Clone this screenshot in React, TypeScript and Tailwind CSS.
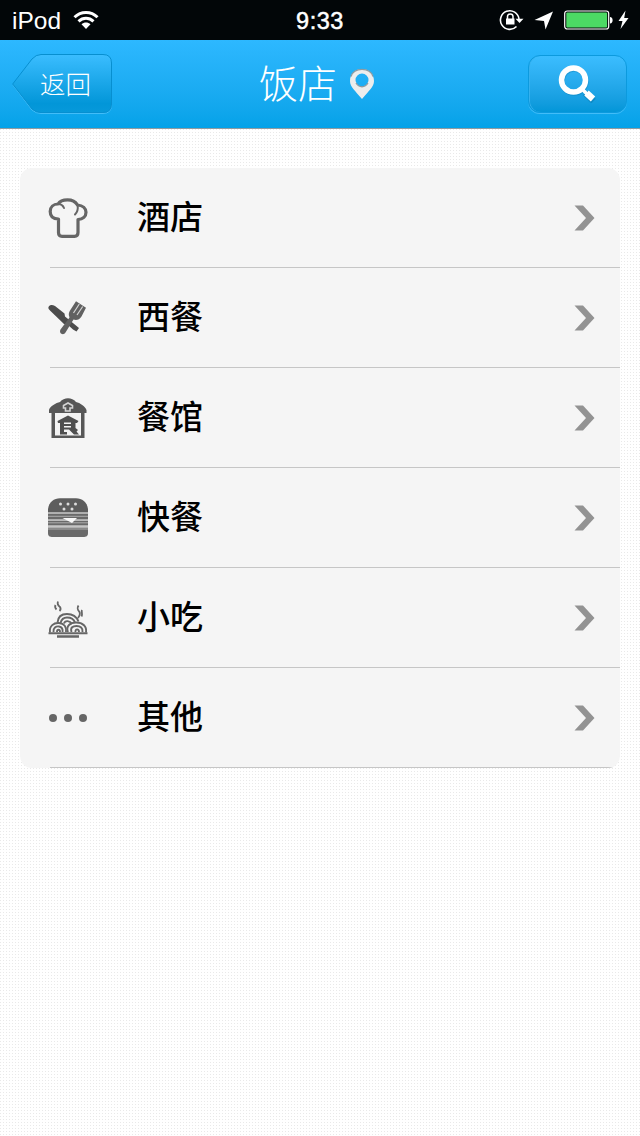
import React from 'react';

const ChefHatIcon = () => (
  <svg width="40" height="40" viewBox="0 0 40 40" fill="none" stroke="#666" strokeWidth="3.200" strokeLinejoin="round" strokeLinecap="round">
    <path
      d="M10.500 21 C5 21 2.200 18 2.200 13.500 C2.200 9 5.500 6 10 6 C11.500 3.500 15 1.800 19.500 1.800 C24 1.800 27.500 3.600 29.500 7 C35 7.500 38 10.500 38 14.300 C38 18.500 35 21.300 30 21.500 L30 34.500 C30 37 29 38.300 26.500 38.300 L14 38.300 C11.500 38.300 10.500 37 10.500 34.500 Z"
      fill="#f5f5f5"
    />
    <path d="M10 6 C13 6 15 7.500 16 10" strokeWidth="2" />
    <path d="M29.500 7 C30.300 11 29.500 14 27 16.500" strokeWidth="2" />
  </svg>
);

const CutleryIcon = () => (
  <svg width="40" height="40" viewBox="0 0 40 40" fill="none">
    <path d="M0.800 8.500 C2 6.500 4.500 6.500 7 8 L16.500 15.500 L17 18.500 L31 30 L28.500 33.500 L25 31.500 L19.500 26.500 L16 26 L2.500 13 C.5 11.500 -.2 10 .8 8.500 Z" fill="#4c4c4c" />
    <path d="M28 3.300 L38 9.800 L33.500 18.500 C31.500 22 28 22.500 25.500 21.500 L17.500 34.500 C15.500 38 10.500 35.500 12.500 31.500 L21.500 19.500 C20 16 21 13.500 23 11 Z" fill="#616161" />
    <path d="M31.300 6 L25.500 15 M34.700 8.500 L29 17" stroke="#d4d4d4" strokeWidth="1.200" />
  </svg>
);

const DinerIcon = () => (
  <svg width="40" height="40" viewBox="0 0 40 40" fill="none">
    <path d="M1 12 C2 8 8 5 12 4 C14 1.500 17 0.300 20 0.300 C23 0.300 26 1.500 28 4 C32 5 37 8 38.500 12 L38.500 15 L36.500 15 L36.500 40 L3.500 40 L3.500 15 L1 15 Z" fill="#575757" />
    <path d="M7 15 H33 V37.500 H7 Z" fill="#f3f3f3" />
    <path d="M17.500 13 H22 V10 H24.500 V7.500 L20 5 L15.500 7.500 V10 H17.500 Z" stroke="#d4d4d4" strokeWidth="1.600" />
    <path d="M20 17.500 L30.500 23 L29 25 H27.500 V30 L30 32 L28.500 33.500 L31 36.500 H26 L21 31.500 H16 V34 H19 V36.500 H12 V25 H10 L9.500 23 Z" fill="#4f4f4f" />
    <path d="M16 25.300 H23 M16 28.800 H23" stroke="#f3f3f3" strokeWidth="1.600" />
  </svg>
);

const BurgerIcon = () => (
  <svg width="40" height="40" viewBox="0 0 40 40" fill="none">
    <path d="M0 14.500 V11 C1 4 6 .3 12 .3 H28 C34 .3 39 4 40 11 V14.500 Z" fill="#5d5d5d" />
    <path d="M0 15.500 H40 V21.500 H0 Z M0 23 H40 V27.500 H0 Z M0 29.500 H40 V35 C40 38 38.500 39 35 39 H5 C1.500 39 0 38 0 35 Z" fill="#6a6a6a" />
    <path d="M0 15 H40 M0 18.300 H40 M0 22.500 H40 M0 24.800 H40 M0 28.700 H40 M0 31 H40" stroke="#b4b4b4" strokeWidth="0.900" />
    <path d="M14.500 20 H29 L24 25 Z" fill="#f8f8f8" />
    <g fill="#ddd">
      <circle cx="12.500" cy="6" r="1.500" />
      <circle cx="20" cy="6" r="1.500" />
      <circle cx="27.500" cy="6" r="1.500" />
      <circle cx="16" cy="11" r="1.500" />
      <circle cx="24" cy="11" r="1.500" />
    </g>
  </svg>
);

const NoodlesIcon = () => (
  <svg width="40" height="40" viewBox="0 0 40 40" fill="none" stroke="#666">
    <path d="M10 3.500 C9 6 10 7.500 12 9 C13 10.500 12.500 12 11.500 13 M7.500 7 C6.500 9 7 10 8.500 11.500 M30.500 7.500 C28.500 11 30 12 31.500 14 C32.500 16 31.500 18 30 20 M34 12 C33 14 35 15.500 33.500 18.500" strokeWidth="1.800" />
    <path d="M9.500 24.500 C10 18.500 14 16 19 16 C24 16 28.500 18.500 30.500 23.500 M12.500 25 C13.500 21 16 19.500 19 19.500 C23 19.500 26 21.500 27 24.500 M16 25.500 C17 22 22 22.500 24 26" strokeWidth="1.900" />
    <path d="M2 34.500 C1 28 6 24.500 11 25 C16.500 25.500 18.500 29 18 34 M5.500 34 C5 30 8 28 11 28.500 C14 29 15 31 14.500 34 M9 34 C9 31 12 31 12 34" strokeWidth="1.900" />
    <path d="M20 34 C17.500 28 22.500 24.500 28 24.500 C35 24.500 39 28.500 38 34.500 M23.500 34 C22 29.500 25 28 28.500 28 C32.500 28 35 30 34.500 34 M27.500 34 C27 30.500 31 30.500 31 34" strokeWidth="1.900" />
    <path d="M0.500 35.300 H39.500" strokeWidth="2" />
    <path d="M9 38.500 H31" strokeWidth="2.400" />
  </svg>
);

const MoreIcon = () => (
  <svg width="40" height="40" viewBox="0 0 40 40" fill="#666">
    <circle cx="5" cy="20" r="4" />
    <circle cx="20" cy="20" r="4" />
    <circle cx="35" cy="20" r="4" />
  </svg>
);

const Chevron = () => (
  <svg className="mr-[25px]" width="21" height="28" viewBox="0 0 21 28">
    <path d="M0.500 1.500 H9 L20.500 14 L9 26.500 H0.500 L12 14 Z" fill="#939393" />
  </svg>
);

const categories = [
  { label: '酒店', Icon: ChefHatIcon },
  { label: '西餐', Icon: CutleryIcon },
  { label: '餐馆', Icon: DinerIcon },
  { label: '快餐', Icon: BurgerIcon },
  { label: '小吃', Icon: NoodlesIcon },
  { label: '其他', Icon: MoreIcon },
];

const StatusBar = () => (
  <div className="grid h-10 grid-cols-3 items-center bg-[#020608] text-white">
    <div className="flex items-center gap-3 pl-3">
      <span className="pt-0.5 text-[24.5px] leading-[38px]">iPod</span>
      <svg width="26" height="20" viewBox="0 0 26 20" fill="none" stroke="#fff" strokeWidth="3">
        <path d="M1.500 7.300 C8 0.800 18 0.800 24.500 7.300" />
        <path d="M5.500 11.300 C10 7.200 16 7.200 20.500 11.300" />
        <path d="M8.500 14.300 C11 12 15 12 17.500 14.300 L13 19 Z" fill="#fff" stroke="none" />
      </svg>
    </div>
    <div className="pt-0.5 text-center text-[23.5px] leading-[38px] tracking-[0.5px] [-webkit-text-stroke:0.500px_white]">9:33</div>
    <div className="flex items-center justify-end pr-[11px]">
      <svg width="25" height="22" viewBox="0 0 25 22" fill="none" stroke="#fff">
        <path d="M20 10 A9.300 9.300 0 1 0 17.500 17.500" strokeWidth="1.600" />
        <path d="M16.500 9.800 H24.500 L20.500 14 Z" fill="#fff" stroke="none" />
        <path d="M7 9.500 H15.500 V15.500 H7 Z" fill="#fff" stroke="none" />
        <path d="M8.500 10 V7.500 C8.500 4 14 4 14 7.500 V10" strokeWidth="1.500" />
      </svg>
      <svg className="ml-2.5" width="20" height="20" viewBox="0 0 20 20">
        <path d="M19 1.500 L11.500 19.500 L10 11 L0.500 10 Z" fill="#fff" />
      </svg>
      <svg className="ml-2.5" width="50" height="20" viewBox="0 0 50 20" fill="none">
        <rect x="0.700" y="1" width="44" height="18" rx="2.500" stroke="#fff" strokeWidth="1.200" />
        <rect x="2.300" y="2.600" width="40.800" height="14.800" rx="1" fill="#4cd964" />
        <path d="M46 7 C49.500 7 49.500 13.500 46 13.500 Z" fill="#fff" />
      </svg>
      <svg className="ml-1" width="11" height="20" viewBox="0 0 11 20">
        <path d="M7.500 0.500 L0.500 11 H4.500 L2.500 19 L10.500 8 H6.200 Z" fill="#fff" />
      </svg>
    </div>
  </div>
);

const NavBar = () => (
  <div className="flex h-[89px] items-center justify-between border-b border-[#8e9ba1] bg-linear-to-b from-[#2db8ff] to-[#03a2e8] pr-[13px] pl-3 text-white">
    <button className="grid h-[60px] w-[100px] items-center">
      <svg className="col-start-1 row-start-1" width="100" height="60" viewBox="0 0 100 60">
        <defs>
          <linearGradient id="button" x1="0" y1="0" x2="0" y2="1">
            <stop offset="0" stopColor="#3bbdff" />
            <stop offset="0.850" stopColor="#0296d8" />
            <stop offset="1" stopColor="#0799da" />
          </linearGradient>
        </defs>
        <path d="M1 31 L20 6 Q24 1.500 29 1.500 H91 Q99.500 1.500 99.500 10 V51 Q99.500 59.500 91 59.500 H29 Q24 59.500 20 56 Z" fill="none" stroke="#42bdf8" />
        <path d="M0.700 30 L20 5 Q24 0.500 29 0.500 H91 Q99.500 0.500 99.500 9 V50 Q99.500 58.500 91 58.500 H29 Q24 58.500 20 55 Z" fill="url(#button)" stroke="#078fd0" />
      </svg>
      <span className="col-start-1 row-start-1 pt-0.5 pl-[7px] text-[25.5px] font-light">返回</span>
    </button>
    <div className="flex items-center gap-3 pr-[6px]">
      <h1 className="text-[39px] leading-none font-light">饭店</h1>
      <svg width="26" height="32" viewBox="0 0 26 32">
        <path d="M13 1 C5.500 1 1 6.500 1 13 C1 19 6.500 23 13 31 C19.500 23 25 19 25 13 C25 6.500 20.500 1 13 1 Z M13 5.500 A6.500 6.500 0 1 1 13 18.500 A6.500 6.500 0 1 1 13 5.500 Z" fill="#ededed" fillRule="evenodd" />
        <path d="M2 8.500 C5 -1 21 -1 24 8.500 M7 15 C10 20 16 20 19 15" fill="none" stroke="#8b9ba3" strokeWidth="1.300" />
      </svg>
    </div>
    <button className="flex h-[58px] w-[99px] items-center justify-center rounded-xl border border-[#0c9ade] bg-linear-to-b from-[#3bbdff] to-[#0296d8] shadow-[0_1px_0_#42bdf8,inset_1px_0_0_#36b1ee]">
      <svg width="38" height="38" viewBox="0 0 38 38" fill="none">
        <path d="M27 28 L35.500 36" stroke="#0878ae" strokeWidth="6.500" opacity="0.500" />
        <circle cx="16" cy="16" r="12" stroke="#0878ae" strokeWidth="5.500" opacity="0.400" />
        <circle cx="15.500" cy="15" r="12" stroke="#fff" strokeWidth="5.500" />
        <path d="M24 24 L29 29" stroke="#fff" strokeWidth="3.500" />
        <path d="M28.500 28 L35 34" stroke="#fff" strokeWidth="6.500" />
      </svg>
    </button>
  </div>
);

const App: React.FC = () => {
  return (
    <div className="min-h-[1136px] w-[640px] bg-white bg-[linear-gradient(to_right,transparent_1px,white_1px),linear-gradient(to_bottom,#e9e9e9_1px,white_1px)] bg-size-[3px_3px] font-['Liberation_Sans','Noto_Sans_CJK_SC',sans-serif]">
      <StatusBar />
      <NavBar />
      <ul className="mx-5 mt-[39px] overflow-hidden rounded-xl bg-[#f5f5f5]">
        {categories.map(({ label, Icon }) => (
          <li key={label} className="flex h-[100px] items-stretch">
            <div className="flex w-[30px] items-center pl-7">
              <div className="shrink-0">
                <Icon />
              </div>
            </div>
            <div className="flex flex-1 items-center justify-between border-b border-[#c6c6c6] pl-[87px]">
              <span className="text-[33px] leading-none font-medium text-black">{label}</span>
              <Chevron />
            </div>
          </li>
        ))}
      </ul>
    </div>
  );
};

export default App;
